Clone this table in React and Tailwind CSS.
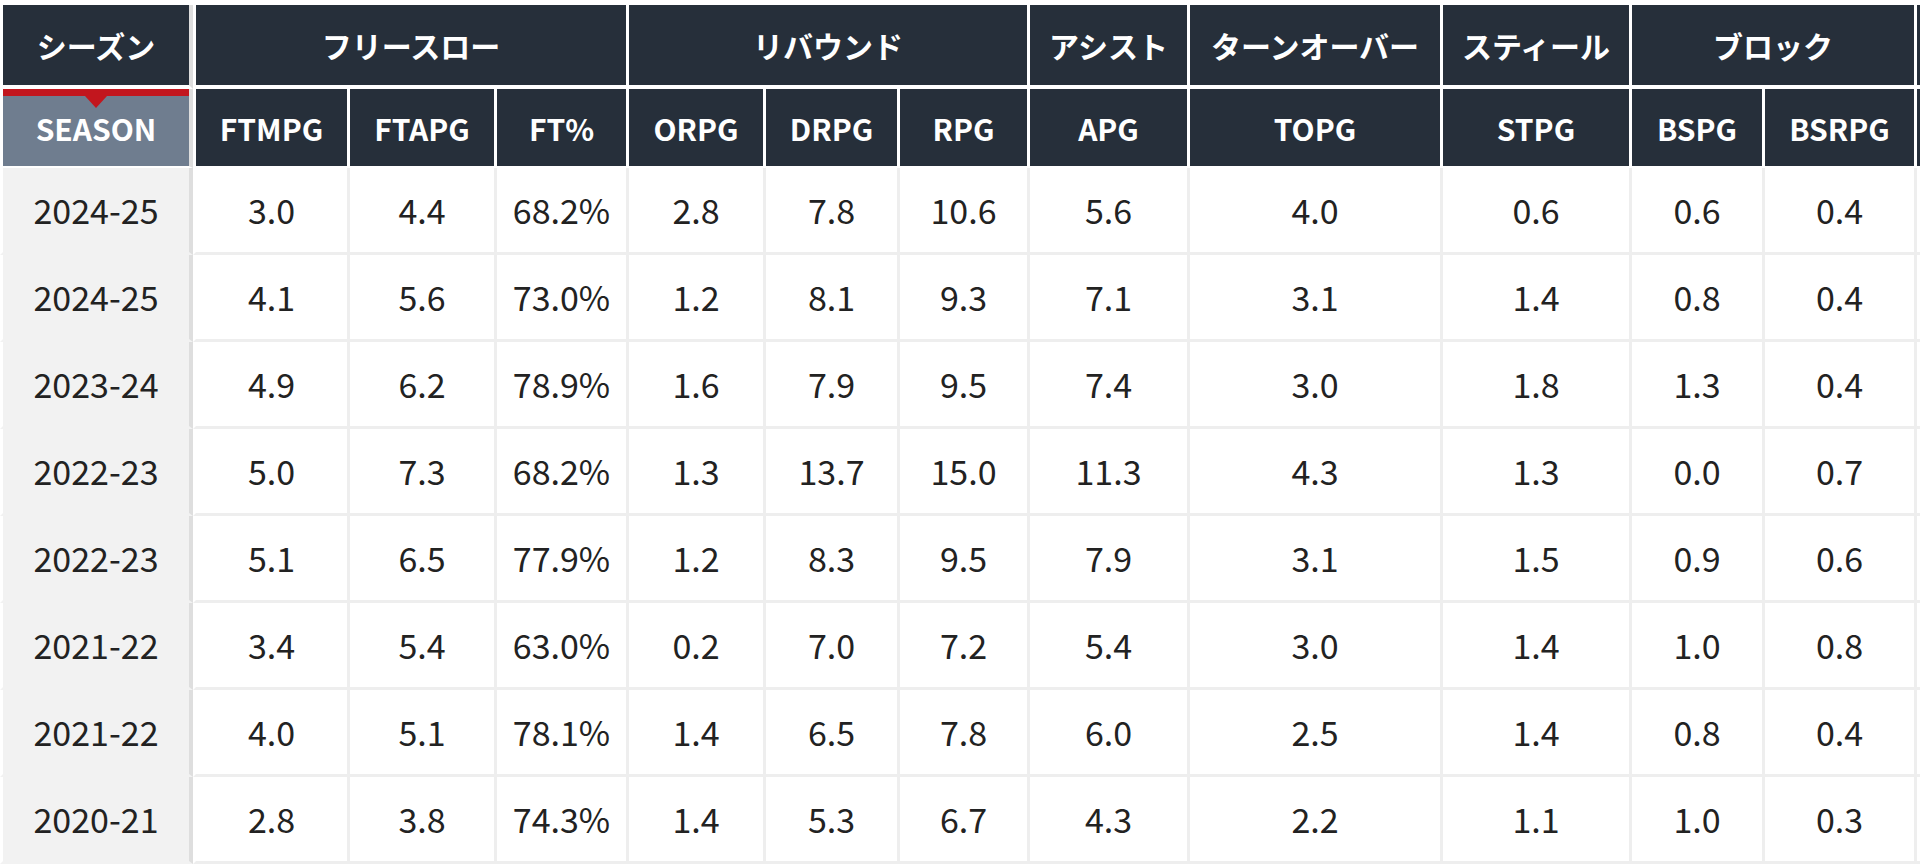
import React from "react";

const cols = [193, 154, 147, 132, 137, 134, 130, 160, 253, 189, 133, 152, 150];

const groups = [
  { label: "フリースロー", span: 3 },
  { label: "リバウンド", span: 3 },
  { label: "アシスト", span: 1 },
  { label: "ターンオーバー", span: 1 },
  { label: "スティール", span: 1 },
  { label: "ブロック", span: 2 },
  { label: "", span: 1 },
];

const subs = ["FTMPG", "FTAPG", "FT%", "ORPG", "DRPG", "RPG", "APG", "TOPG", "STPG", "BSPG", "BSRPG", ""];

const rows = [
  ["2024-25", "3.0", "4.4", "68.2%", "2.8", "7.8", "10.6", "5.6", "4.0", "0.6", "0.6", "0.4", ""],
  ["2024-25", "4.1", "5.6", "73.0%", "1.2", "8.1", "9.3", "7.1", "3.1", "1.4", "0.8", "0.4", ""],
  ["2023-24", "4.9", "6.2", "78.9%", "1.6", "7.9", "9.5", "7.4", "3.0", "1.8", "1.3", "0.4", ""],
  ["2022-23", "5.0", "7.3", "68.2%", "1.3", "13.7", "15.0", "11.3", "4.3", "1.3", "0.0", "0.7", ""],
  ["2022-23", "5.1", "6.5", "77.9%", "1.2", "8.3", "9.5", "7.9", "3.1", "1.5", "0.9", "0.6", ""],
  ["2021-22", "3.4", "5.4", "63.0%", "0.2", "7.0", "7.2", "5.4", "3.0", "1.4", "1.0", "0.8", ""],
  ["2021-22", "4.0", "5.1", "78.1%", "1.4", "6.5", "7.8", "6.0", "2.5", "1.4", "0.8", "0.4", ""],
  ["2020-21", "2.8", "3.8", "74.3%", "1.4", "5.3", "6.7", "4.3", "2.2", "1.1", "1.0", "0.3", ""],
];

export default function App() {
  return (
    <div className="w-[1920px] h-[866px] overflow-hidden bg-white pt-[5px] font-['Noto_Sans_CJK_JP','Noto_Sans',sans-serif]">
      <table className="table-fixed border-separate border-spacing-0 w-[2064px]">
        <colgroup>
          {cols.map((w, i) => (
            <col key={i} style={{ width: w }} />
          ))}
        </colgroup>
        <thead>
          <tr>
            <th className="h-[84px] p-0 bg-[#262f3a] text-white text-[30px] font-bold leading-none text-center border-l-[3px] border-l-white border-r-[4px] border-r-[#dedede] border-b-[4px] border-b-white">
              シーズン
            </th>
            {groups.map((g, i) => (
              <th
                key={i}
                colSpan={g.span}
                className="h-[84px] p-0 bg-[#262f3a] text-white text-[30px] font-bold leading-none text-center border-l-[3px] border-l-white border-b-[4px] border-b-white"
              >
                {g.label}
              </th>
            ))}
          </tr>
          <tr>
            <th className="relative h-[79px] p-0 bg-[#6f7d8f] text-white text-[30px] font-bold leading-none text-center border-l-[3px] border-l-white border-r-[4px] border-r-[#dedede] border-b-[2px] border-b-white">
              <span className="absolute left-0 right-0 top-0 h-[7px] bg-[#c2161e]" />
              <span className="absolute left-1/2 top-[7px] -translate-x-1/2 w-0 h-0 border-l-[11px] border-r-[11px] border-t-[12px] border-l-transparent border-r-transparent border-t-[#c2161e]" />
              SEASON
            </th>
            {subs.map((s, i) => (
              <th
                key={i}
                className="h-[79px] p-0 bg-[#262f3a] text-white text-[30px] font-bold leading-none text-center border-l-[3px] border-l-white border-b-[2px] border-b-white"
              >
                {s}
              </th>
            ))}
          </tr>
        </thead>
        <tbody>
          {rows.map((r, ri) => (
            <tr key={ri}>
              {r.map((v, ci) =>
                ci === 0 ? (
                  <td
                    key={ci}
                    className="h-[87px] p-0 bg-[#f2f2f2] text-[#222222] text-[34px] font-normal leading-none text-center border-l-[3px] border-l-white border-r-[4px] border-r-[#dedede] border-b-[3px] border-b-[#f2f2f2]"
                  >
                    {v}
                  </td>
                ) : ci === 1 ? (
                  <td
                    key={ci}
                    className="h-[87px] p-0 bg-white text-[#222222] text-[34px] font-normal leading-none text-center border-l-[3px] border-l-white border-b-[3px] border-b-[#eeeeee]"
                  >
                    {v}
                  </td>
                ) : (
                  <td
                    key={ci}
                    className="h-[87px] p-0 bg-white text-[#222222] text-[34px] font-normal leading-none text-center border-l-[3px] border-l-[#eeeeee] border-b-[3px] border-b-[#eeeeee]"
                  >
                    {v}
                  </td>
                )
              )}
            </tr>
          ))}
        </tbody>
      </table>
    </div>
  );
}
